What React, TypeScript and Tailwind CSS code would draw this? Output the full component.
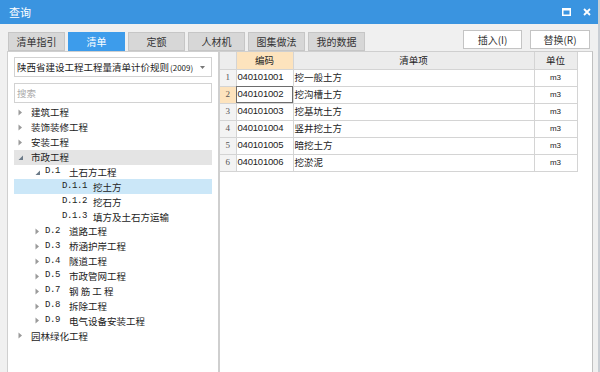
import clsx from 'clsx';

const tabs = ['清单指引', '清单', '定额', '人材机', '图集做法', '我的数据'];

type TreeRow = { level: 0 | 1 | 2; code?: string; label: string; open?: boolean; tone?: 'gray' | 'sel' };

const tree: TreeRow[] = [
  { level: 0, label: '建筑工程' },
  { level: 0, label: '装饰装修工程' },
  { level: 0, label: '安装工程' },
  { level: 0, label: '市政工程', open: true, tone: 'gray' },
  { level: 1, code: 'D.1', label: '土石方工程', open: true },
  { level: 2, code: 'D.1.1', label: '挖土方', tone: 'sel' },
  { level: 2, code: 'D.1.2', label: '挖石方' },
  { level: 2, code: 'D.1.3', label: '填方及土石方运输' },
  { level: 1, code: 'D.2', label: '道路工程' },
  { level: 1, code: 'D.3', label: '桥涵护岸工程' },
  { level: 1, code: 'D.4', label: '隧道工程' },
  { level: 1, code: 'D.5', label: '市政管网工程' },
  { level: 1, code: 'D.7', label: '钢 筋 工 程' },
  { level: 1, code: 'D.8', label: '拆除工程' },
  { level: 1, code: 'D.9', label: '电气设备安装工程' },
  { level: 0, label: '园林绿化工程' },
];

const rows = [
  ['040101001', '挖一般土方'],
  ['040101002', '挖沟槽土方'],
  ['040101003', '挖基坑土方'],
  ['040101004', '竖井挖土方'],
  ['040101005', '暗挖土方'],
  ['040101006', '挖淤泥'],
];

function Arrow({ open }: { open?: boolean }) {
  return open ? (
    <svg width="5" height="7" viewBox="0 0 5 7" className="shrink-0">
      <path d="M5 1.5L5 6L0.5 6Z" fill="#6b7a88" />
    </svg>
  ) : (
    <svg width="5" height="7" viewBox="0 0 5 7" className="shrink-0">
      <path d="M0.5 0.5L4 3.5L0.5 6.5Z" fill="#9a9a9a" />
    </svg>
  );
}

function Row({ r }: { r: TreeRow }) {
  return (
    <div
      className={clsx(
        'flex items-center h-[14.9px] text-[9.5px] text-[#222] whitespace-pre',
        r.tone === 'gray' && 'bg-[#e4e4e4]',
        r.tone === 'sel' && 'bg-[#cbe7f8]',
        r.level === 0 && 'pl-[4px]',
        r.level === 1 && 'pl-[21px]',
        r.level === 2 && 'pl-[48px]'
      )}
    >
      {r.level < 2 && <Arrow open={r.open} />}
      {r.level === 0 && <span className="ml-[8px]">{r.label}</span>}
      {r.level > 0 && (
        <>
          <span
            className={clsx(
              "font-['Liberation_Mono',monospace] text-[9px] tracking-[-0.4px] text-[#222]",
              r.level === 1 ? 'ml-[5px] w-[24px]' : 'w-[31px]',
              r.tone === 'sel' && 'text-[#2c5a80]'
            )}
          >
            {r.code}
          </span>
          <span>{r.label}</span>
        </>
      )}
    </div>
  );
}

export default function App() {
  return (
    <div className="w-[600px] h-[372px] overflow-hidden flex flex-col bg-[#f0f0f0] font-['Noto_Sans_CJK_SC','Noto_Sans',sans-serif] border-r-2 border-[#c9ced4]">
      {/* Title bar */}
      <div className="h-[24px] shrink-0 bg-[#3a94e0] flex items-center justify-between pl-[9px] pr-[7px] text-white">
        <span className="text-[11px] leading-none">查询</span>
        <div className="flex items-center gap-[12px]">
          <svg width="9" height="8" viewBox="0 0 9 8">
            <rect x="0.75" y="1" width="7.5" height="6.25" fill="none" stroke="white" strokeWidth="1.5" />
            <rect x="0" y="0" width="9" height="2.5" fill="white" />
          </svg>
          <svg width="8" height="8" viewBox="0 0 8 8">
            <path d="M1 1L7 7M7 1L1 7" stroke="white" strokeWidth="1.8" />
          </svg>
        </div>
      </div>

      {/* Tabs + buttons */}
      <div className="h-[27px] shrink-0 flex justify-between pl-[8px] pr-[8px]">
        <div className="flex gap-[3px] pt-[8px]">
          {tabs.map((t, i) => (
            <div
              key={t}
              className={clsx(
                'w-[57px] h-[19px] flex items-center justify-center text-[10px] border',
                i === 1 ? 'bg-[#3d9ceb] border-[#3d9ceb] text-white' : 'bg-[#d7d7d7] border-[#c6c6c6] text-[#333]'
              )}
            >
              {t}
            </div>
          ))}
        </div>
        <div className="flex gap-[8px] pt-[6px]">
          <button className="w-[59px] h-[19px] bg-white border border-[#c4c4c4] text-[10px] text-[#333]">插入(I)</button>
          <button className="w-[60px] h-[19px] bg-white border border-[#c4c4c4] text-[10px] text-[#333]">替换(R)</button>
        </div>
      </div>

      {/* Body */}
      <div className="flex-1 flex pl-[7px] pr-[5px] min-h-0">
        {/* Left panel */}
        <div className="w-[212px] shrink-0 bg-white border border-b-0 border-[#cfcfcf] flex flex-col px-[6px] pt-[5px]">
          <div className="h-[20px] border border-[#d2d2d2] flex items-center justify-between pl-[2px] pr-[6px]">
            <span className="text-[9.5px] text-[#222] whitespace-nowrap">
              陕西省建设工程工程量清单计价规则<span className="text-[8px] ml-[1px]">(2009)</span>
            </span>
            <svg width="5" height="3" viewBox="0 0 5 3">
              <path d="M0 0L5 0L2.5 3Z" fill="#777" />
            </svg>
          </div>
          <div className="h-[20px] mt-[6px] border border-[#d2d2d2] flex items-center pl-[2px] text-[9.5px] text-[#aaa]">搜索</div>
          <div className="mt-[2px] flex flex-col">
            {tree.map((r, i) => (
              <Row key={i} r={r} />
            ))}
          </div>
        </div>

        {/* Right panel */}
        <div className="flex-1 bg-white border border-b-0 border-[#cfcfcf] border-r-[#c0c0c0]">
          <table className="border-collapse text-[9.5px] text-[#222] table-fixed w-[357px]">
            <colgroup>
              <col className="w-[16px]" />
              <col className="w-[57px]" />
              <col className="w-[241px]" />
              <col className="w-[43px]" />
            </colgroup>
            <thead>
              <tr className="h-[17px]">
                <th className="bg-[#ededed] border-r border-b border-[#d4d4d4]" />
                <th className="bg-[#fde3bd] border-r border-b border-[#d4d4d4] font-normal">编码</th>
                <th className="bg-[#ececec] border-r border-b border-[#d4d4d4] font-normal">清单项</th>
                <th className="bg-[#ececec] border-r border-b border-[#d4d4d4] font-normal">单位</th>
              </tr>
            </thead>
            <tbody>
              {rows.map(([code, name], i) => (
                <tr key={code} className="h-[17px]">
                  <td
                    className={clsx(
                      'border-r border-b border-[#d4d4d4] text-center text-[9px] text-[#555] font-["Liberation_Serif",serif]',
                      i === 1 ? 'bg-[#fde3bd]' : 'bg-[#f3f3f3]'
                    )}
                  >
                    {i + 1}
                  </td>
                  <td
                    className={clsx(
                      "border-r border-b font-['Liberation_Sans',sans-serif] text-[9.5px] pl-[1px] tracking-[-0.2px]",
                      i === 1 ? 'outline outline-1 -outline-offset-1 outline-[#6d6d6d] border-[#d4d4d4]' : 'border-[#d4d4d4]'
                    )}
                  >
                    {code}
                  </td>
                  <td className="border-r border-b border-[#d4d4d4] pl-[1px]">{name}</td>
                  <td className="border-r border-b border-[#d4d4d4] text-center text-[8px] font-['Liberation_Sans',sans-serif]">m3</td>
                </tr>
              ))}
            </tbody>
          </table>
        </div>
      </div>
    </div>
  );
}
